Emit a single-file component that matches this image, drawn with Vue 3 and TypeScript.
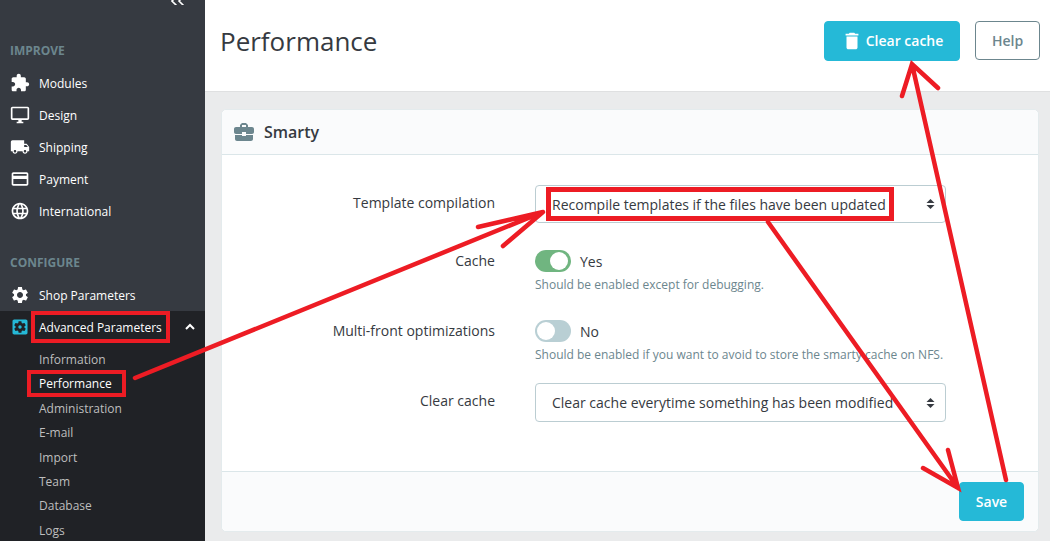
<script setup lang="ts">
const icons: Record<string, string> = {
  extension: 'M20.5 11H19V7c0-1.1-.9-2-2-2h-4V3.5C13 2.12 11.88 1 10.5 1S8 2.12 8 3.5V5H4c-1.1 0-1.99.9-1.99 2v3.8H3.5c1.49 0 2.7 1.21 2.7 2.7s-1.21 2.7-2.7 2.7H2V20c0 1.1.9 2 2 2h3.8v-1.5c0-1.49 1.21-2.7 2.7-2.7 1.49 0 2.7 1.21 2.7 2.7V22H17c1.1 0 2-.9 2-2v-4h1.5c1.38 0 2.5-1.12 2.5-2.5S21.88 11 20.5 11z',
  desktop: 'M21 2H3c-1.1 0-2 .9-2 2v12c0 1.1.9 2 2 2h7v2H8v2h8v-2h-2v-2h7c1.1 0 2-.9 2-2V4c0-1.1-.9-2-2-2zm0 14H3V4h18v12z',
  shipping: 'M20 8h-3V4H3c-1.1 0-2 .9-2 2v11h2c0 1.66 1.34 3 3 3s3-1.34 3-3h6c0 1.66 1.34 3 3 3s3-1.34 3-3h2v-5l-3-4zM6 18.5c-.83 0-1.5-.67-1.5-1.5s.67-1.5 1.5-1.5 1.5.67 1.5 1.5-.67 1.5-1.5 1.5zm13.5-9l1.96 2.5H17V9.5h2.5zm-1.5 9c-.83 0-1.5-.67-1.5-1.5s.67-1.5 1.5-1.5 1.5.67 1.5 1.5-.67 1.5-1.5 1.5z',
  payment: 'M20 4H4c-1.11 0-1.99.89-1.99 2L2 18c0 1.11.89 2 2 2h16c1.11 0 2-.89 2-2V6c0-1.11-.89-2-2-2zm0 14H4v-6h16v6zm0-10H4V6h16v2z',
  language: 'M11.99 2C6.47 2 2 6.48 2 12s4.47 10 9.99 10C17.52 22 22 17.52 22 12S17.52 2 11.99 2zm6.93 6h-2.95c-.32-1.25-.78-2.45-1.38-3.56 1.84.63 3.37 1.91 4.33 3.56zM12 4.04c.83 1.2 1.48 2.53 1.91 3.96h-3.82c.43-1.43 1.08-2.76 1.91-3.96zM4.26 14C4.1 13.36 4 12.69 4 12s.1-1.36.26-2h3.38c-.08.66-.14 1.32-.14 2 0 .68.06 1.34.14 2H4.26zm.82 2h2.95c.32 1.25.78 2.45 1.38 3.56-1.84-.63-3.37-1.9-4.33-3.56zm2.95-8H5.08c.96-1.66 2.49-2.93 4.33-3.56C8.81 5.55 8.35 6.75 8.03 8zM12 19.96c-.83-1.2-1.48-2.53-1.91-3.96h3.82c-.43 1.43-1.08 2.76-1.91 3.96zM14.34 14H9.66c-.09-.66-.16-1.32-.16-2 0-.68.07-1.35.16-2h4.68c.09.65.16 1.32.16 2 0 .68-.07 1.34-.16 2zm.25 5.56c.6-1.11 1.06-2.31 1.38-3.56h2.95c-.96 1.65-2.49 2.93-4.33 3.56zM16.36 14c.08-.66.14-1.32.14-2 0-.68-.06-1.34-.14-2h3.38c.16.64.26 1.31.26 2s-.1 1.36-.26 2h-3.38z',
  settings: 'M19.14 12.94c.04-.3.06-.61.06-.94 0-.32-.02-.64-.07-.94l2.03-1.58c.18-.14.23-.41.12-.61l-1.92-3.32c-.12-.22-.37-.29-.59-.22l-2.39.96c-.5-.38-1.03-.7-1.62-.94l-.36-2.54c-.04-.24-.24-.41-.48-.41h-3.84c-.24 0-.43.17-.47.41l-.36 2.54c-.59.24-1.13.57-1.62.94l-2.39-.96c-.22-.08-.47 0-.59.22L2.74 8.87c-.12.21-.08.47.12.61l2.03 1.58c-.05.3-.09.63-.09.94s.02.64.07.94l-2.03 1.58c-.18.14-.23.41-.12.61l1.92 3.32c.12.22.37.29.59.22l2.39-.96c.5.38 1.03.7 1.62.94l.36 2.54c.05.24.24.41.48.41h3.84c.24 0 .44-.17.47-.41l.36-2.54c.59-.24 1.13-.56 1.62-.94l2.39.96c.22.08.47 0 .59-.22l1.92-3.32c.12-.22.07-.47-.12-.61l-2.01-1.58zM12 15.6c-1.98 0-3.6-1.62-3.6-3.6s1.62-3.6 3.6-3.6 3.6 1.62 3.6 3.6-1.62 3.6-3.6 3.6z',
  apps: 'M12 10c-1.1 0-2 .9-2 2s.9 2 2 2 2-.9 2-2-.9-2-2-2zm7-7H5c-1.11 0-2 .9-2 2v14c0 1.1.89 2 2 2h14c1.11 0 2-.9 2-2V5c0-1.1-.89-2-2-2zm-1.75 9c0 .23-.02.46-.05.68l1.48 1.16c.13.11.17.3.08.45l-1.4 2.42c-.09.15-.27.21-.43.15l-1.74-.7c-.36.28-.76.51-1.18.69l-.26 1.85c-.03.17-.18.3-.35.3h-2.8c-.17 0-.32-.13-.35-.29l-.26-1.85c-.43-.18-.82-.41-1.18-.69l-1.74.7c-.16.06-.34 0-.43-.15l-1.4-2.42c-.09-.15-.05-.34.08-.45l1.48-1.16c-.03-.23-.05-.46-.05-.69 0-.23.02-.46.05-.68l-1.48-1.16c-.13-.11-.17-.3-.08-.45l1.4-2.42c.09-.15.27-.21.43-.15l1.74.7c.36-.28.76-.51 1.18-.69l.26-1.85c.03-.17.18-.3.35-.3h2.8c.17 0 .32.13.35.29l.26 1.85c.43.18.82.41 1.18.69l1.74-.7c.16-.06.34 0 .43.15l1.4 2.42c.09.15.05.34-.08.45l-1.48 1.16c.03.23.05.46.05.69z',
  trash: 'M6 19c0 1.1.9 2 2 2h8c1.1 0 2-.9 2-2V7H6v12zM19 4h-3.5l-1-1h-5l-1 1H5v2h14V4z',
  business: 'M10 16v-1H3.01L3 19c0 1.11.89 2 2 2h14c1.11 0 2-.89 2-2v-4h-7v1h-4zm10-9h-4.01V5l-2-2h-4l-2 2v2H4c-1.1 0-2 .9-2 2v3c0 1.11.89 2 2 2h6v-2h4v2h6c1.1 0 2-.9 2-2V9c0-1.1-.9-2-2-2zm-6 0h-4V5h4v2z'
}

const improve = [
  { label: 'Modules', icon: 'extension' },
  { label: 'Design', icon: 'desktop' },
  { label: 'Shipping', icon: 'shipping' },
  { label: 'Payment', icon: 'payment' },
  { label: 'International', icon: 'language' }
]

const submenu = ['Information', 'Performance', 'Administration', 'E-mail', 'Import', 'Team', 'Database', 'Logs']

const arrows = [
  'M135 378 L543 212 M478 227 L543 212 L503 246',
  'M768 222 L958 488 M923 468 L958 488 L948 450',
  'M1006 480 L912 64 M902 96 L912 64 L938 88'
]
</script>

<template>
  <div class="page">
    <aside class="sidebar">
      <div class="collapse">
        <svg width="14" height="5" viewBox="0 0 14 5">
          <path d="M6 -4 L1 1 L6 6 M13 -4 L8 1 L13 6" fill="none" stroke="#fff" stroke-width="1.6" />
        </svg>
      </div>
      <div class="section improve">IMPROVE</div>
      <div v-for="item in improve" :key="item.label" class="nav-item">
        <svg class="nav-icon" viewBox="0 0 24 24"><path :d="icons[item.icon]" fill="#fff" /></svg>
        <span>{{ item.label }}</span>
      </div>
      <div class="section configure">CONFIGURE</div>
      <div class="nav-item">
        <svg class="nav-icon" viewBox="0 0 24 24"><path :d="icons.settings" fill="#fff" /></svg>
        <span>Shop Parameters</span>
      </div>
      <div class="active-group">
        <div class="nav-item">
          <svg class="nav-icon" viewBox="0 0 24 24"><path :d="icons.apps" fill="#25b9d7" /></svg>
          <span class="grow">Advanced Parameters</span>
          <svg class="chevron" width="12" height="8" viewBox="0 0 12 8">
            <path d="M2 6 L6 2 L10 6" fill="none" stroke="#fff" stroke-width="2" />
          </svg>
        </div>
        <div
          v-for="sub in submenu"
          :key="sub"
          class="sub-item"
          :class="{ current: sub === 'Performance' }"
        >{{ sub }}</div>
      </div>
    </aside>

    <main class="main">
      <header class="topbar">
        <h1 class="title">Performance</h1>
        <div class="actions">
          <button class="btn primary clear">
            <svg width="22" height="22" viewBox="0 0 24 24"><path :d="icons.trash" fill="#fff" /></svg>
            <span>Clear cache</span>
          </button>
          <button class="btn outline">Help</button>
        </div>
      </header>

      <section class="content">
        <div class="card">
          <div class="card-header">
            <svg width="24" height="24" viewBox="0 0 24 24"><path :d="icons.business" fill="#6c868e" /></svg>
            <span>Smarty</span>
          </div>
          <div class="card-body">
            <div class="row row-a">
              <label class="label mid">Template compilation</label>
              <div class="select">
                <span>Recompile templates if the files have been updated</span>
                <svg class="sort" width="9" height="12" viewBox="0 0 9 12"><path d="M4.5 1 L8.5 5 H0.5 Z M4.5 11 L8.5 7 H0.5 Z" fill="#363a41" /></svg>
              </div>
            </div>
            <div class="row row-a">
              <label class="label">Cache</label>
              <div>
                <div class="switch-line">
                  <span class="switch on"><i></i></span>
                  <span>Yes</span>
                </div>
                <p class="help">Should be enabled except for debugging.</p>
              </div>
            </div>
            <div class="row row-b">
              <label class="label">Multi-front optimizations</label>
              <div>
                <div class="switch-line">
                  <span class="switch"><i></i></span>
                  <span>No</span>
                </div>
                <p class="help">Should be enabled if you want to avoid to store the smarty cache on NFS.</p>
              </div>
            </div>
            <div class="row">
              <label class="label mid">Clear cache</label>
              <div class="select tall">
                <span>Clear cache everytime something has been modified</span>
                <svg class="sort" width="9" height="12" viewBox="0 0 9 12"><path d="M4.5 1 L8.5 5 H0.5 Z M4.5 11 L8.5 7 H0.5 Z" fill="#363a41" /></svg>
              </div>
            </div>
          </div>
          <div class="card-footer">
            <button class="btn primary save">Save</button>
          </div>
        </div>
      </section>
    </main>

    <svg class="annotations" width="1050" height="541" viewBox="0 0 1050 541">
      <g fill="none" stroke="#ed1c24">
        <rect x="33" y="313" width="135" height="28" stroke-width="4" />
        <rect x="29" y="372" width="95" height="23" stroke-width="4" />
        <rect x="548.5" y="189.5" width="343" height="29" stroke-width="5" />
        <path
          v-for="d in arrows"
          :key="d"
          :d="d"
          stroke-width="4.5"
          stroke-linecap="round"
          stroke-linejoin="miter"
        />
      </g>
    </svg>
  </div>
</template>

<style>
html, body { margin: 0; overflow: hidden; }
</style>

<style scoped>
.page {
  position: relative;
  display: flex;
  width: 1050px;
  height: 541px;
  overflow: hidden;
  font-family: "Open Sans", "Noto Sans", sans-serif;
  color: #363a41;
  font-size: 14px;
}
.sidebar {
  width: 205px;
  flex: none;
  background: #363a41;
  display: flex;
  flex-direction: column;
  overflow: hidden;
}
.collapse {
  height: 5px;
  padding-left: 171px;
  line-height: 0;
}
.section {
  color: #6c868e;
  font-weight: 700;
  font-size: 12px;
  line-height: 16px;
  padding-left: 10px;
}
.improve { margin-top: 38px; margin-bottom: 8px; }
.configure { margin-top: 28px; margin-bottom: 8px; }
.nav-item {
  height: 32px;
  display: flex;
  align-items: center;
  padding-left: 10px;
  gap: 9px;
  flex: none;
  color: #fff;
  font-size: 12px;
}
.nav-icon { width: 20px; height: 20px; flex: none; }
.grow { flex: 1; }
.chevron { margin-right: 9px; }
.active-group { background: #202226; flex: 1; padding-bottom: 10px; }
.sub-item {
  height: 24.4px;
  line-height: 24.4px;
  padding-left: 39px;
  color: #bebebe;
  font-size: 12px;
}
.active-group .nav-item + .sub-item { margin-top: 5px; }
.sub-item.current { color: #fff; }
.main {
  flex: 1;
  display: flex;
  flex-direction: column;
  background: #eaebec;
  min-width: 0;
}
.topbar {
  height: 92px;
  box-sizing: border-box;
  flex: none;
  background: #fff;
  border-bottom: 1px solid #dfe0e1;
  display: flex;
  justify-content: space-between;
  padding: 0 10px 0 15px;
}
.title {
  margin: 0;
  font-size: 26px;
  font-weight: 400;
  line-height: 83px;
}
.actions { display: flex; gap: 15px; padding-top: 21px; align-items: flex-start; }
.btn {
  font-family: inherit;
  font-size: 14px;
  font-weight: 600;
  border-radius: 4px;
  box-sizing: border-box;
  padding: 0;
}
.primary { background: #25b9d7; border: 1px solid #25b9d7; color: #fff; }
.clear {
  width: 136px;
  height: 40px;
  display: flex;
  align-items: center;
  justify-content: center;
  gap: 3px;
}
.clear span { margin-bottom: 2px; }
.outline {
  width: 65px;
  height: 39px;
  background: #fff;
  border: 1px solid #6c868e;
  color: #6c868e;
}
.content { padding: 17px 11px 0 16px; }
.card {
  background: #fff;
  border: 1px solid #e4ebed;
  border-radius: 5px;
  box-sizing: border-box;
  height: 423px;
  display: flex;
  flex-direction: column;
}
.card-header {
  height: 45px;
  box-sizing: border-box;
  background: #fafbfc;
  border-bottom: 1px solid #dbe6e9;
  border-radius: 5px 5px 0 0;
  display: flex;
  align-items: center;
  gap: 8px;
  padding-left: 10px;
  font-size: 16px;
  font-weight: 600;
}
.card-body { flex: 1; padding-top: 30px; }
.row {
  display: grid;
  grid-template-columns: 273px 411px;
  column-gap: 40px;
  align-items: start;
}
.row-a { margin-bottom: 27px; }
.row-b { margin-bottom: 20px; }
.label { text-align: right; line-height: 22px; }
.label.mid { line-height: 36px; }
.select {
  height: 38px;
  box-sizing: border-box;
  border: 1px solid #bbcdd2;
  border-radius: 4px;
  display: flex;
  align-items: center;
  justify-content: space-between;
  padding: 0 10px 0 16px;
}
.select.tall { height: 39px; }
.sort { flex: none; }
.switch-line { display: flex; align-items: center; gap: 9px; height: 22px; }
.switch {
  width: 36px;
  height: 22px;
  border-radius: 11px;
  background: #b9cfd4;
  position: relative;
  display: block;
  flex: none;
}
.switch i {
  position: absolute;
  top: 2px;
  left: 2px;
  width: 18px;
  height: 18px;
  border-radius: 50%;
  background: #fff;
}
.switch.on { background: #70b580; }
.switch.on i { left: 15px; }
.help {
  margin: 5px 0 0;
  font-size: 12px;
  line-height: 16px;
  color: #6c868e;
  white-space: nowrap;
}
.card-footer {
  height: 60px;
  box-sizing: border-box;
  background: #fafbfc;
  border-top: 1px solid #dbe6e9;
  border-radius: 0 0 5px 5px;
  display: flex;
  justify-content: flex-end;
  padding: 10px 14px 0 0;
}
.save { width: 65px; height: 39px; }
.annotations {
  position: absolute;
  inset: 0;
  pointer-events: none;
}
</style>
